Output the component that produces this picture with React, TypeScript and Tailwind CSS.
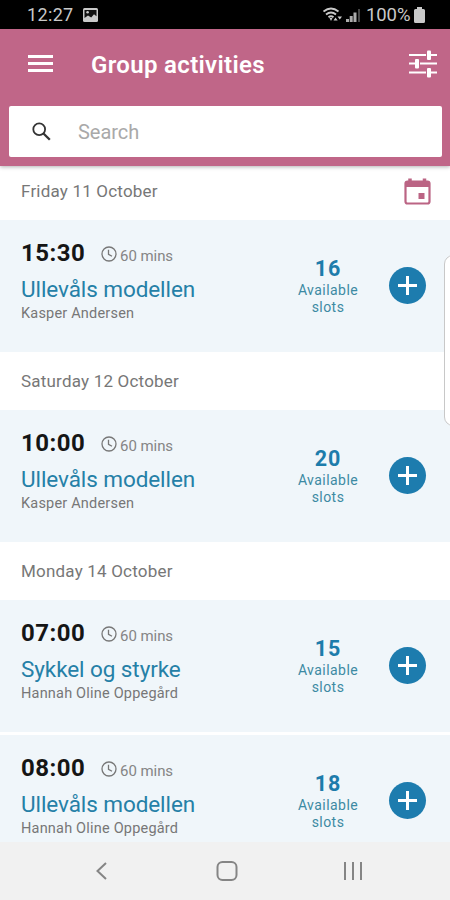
const days = [
  {
    date: "Friday 11 October",
    rowClass: "h-[54px] pb-[3px]",
    showCalendar: true,
    activities: [
      { time: "15:30", title: "Ullevåls modellen", trainer: "Kasper Andersen", slots: 16 },
    ],
  },
  {
    date: "Saturday 12 October",
    rowClass: "h-[58px]",
    showCalendar: false,
    activities: [
      { time: "10:00", title: "Ullevåls modellen", trainer: "Kasper Andersen", slots: 20 },
    ],
  },
  {
    date: "Monday 14 October",
    rowClass: "h-[58px]",
    showCalendar: false,
    activities: [
      { time: "07:00", title: "Sykkel og styrke", trainer: "Hannah Oline Oppegård", slots: 15 },
      { time: "08:00", title: "Ullevåls modellen", trainer: "Hannah Oline Oppegård", slots: 18 },
    ],
  },
];

type Activity = (typeof days)[number]["activities"][number];

function StatusBar() {
  return (
    <div className="flex h-[29px] shrink-0 items-center bg-black pl-[27px] pr-[25px] pt-px text-[#c9c9c9]">
      <span className="w-[46px] text-[18px] leading-none tracking-[0.35px]">12:27</span>
      <svg className="ml-[10px]" width="15" height="14" viewBox="0 0 15 14">
        <rect width="15" height="14" rx="1.5" fill="currentColor" />
        <path d="M1.5 10V2h12v6.3L11 6.200 8.200 9.500 5 7.500z" fill="#111" />
        <circle cx="4.6" cy="4.3" r="1.3" fill="currentColor" />
      </svg>
      <svg className="ml-auto" width="20" height="16" viewBox="0 0 20 16" fill="none" stroke="currentColor" strokeWidth="1.9">
        <path d="M0.500 4.500Q8-1.500 15.500 4.500M3 7.500Q8 3.500 13 7.500M5.500 10.300Q8 8.300 10.500 10.300" />
        <path d="M6.500 11h3L8 14z" fill="currentColor" stroke="none" />
        <path d="M10.500 13.500l2-3 2.200 3zM14.500 9.500h4.500l-2.200 3z" fill="currentColor" stroke="none" />
      </svg>
      <svg className="ml-[3px]" width="15" height="14" viewBox="0 0 15 14" fill="currentColor">
        <path d="M0 11h3v3H0zM3.700 8h3v6h-3zM7.500 4.500h3V14h-3z" opacity=".85" />
        <path d="M12 1h2v13h-2z" opacity=".35" />
      </svg>
      <span className="ml-[5px] w-[45px] text-[18.500px] leading-none tracking-[-0.1px]">100%</span>
      <svg className="ml-[3px]" width="11" height="16" viewBox="0 0 11 16" fill="currentColor">
        <path d="M3 0h5v2h1.500Q11 2 11 3.500V14.500Q11 16 9.500 16h-8Q0 16 0 14.500v-11Q0 2 1.500 2H3z" />
      </svg>
    </div>
  );
}

function Header() {
  return (
    <header className="z-10 h-[137px] shrink-0 bg-[#c06688] px-[9px] shadow-[0_1px_4px_rgba(0,0,0,0.3)]">
      <div className="flex h-[77px] items-center pb-[8px] pl-[19px] pr-[4px] text-white">
        <svg width="25" height="17" viewBox="0 0 25 17" fill="currentColor">
          <path d="M0 0h25v3H0zM0 7h25v3H0zM0 14h25v3H0z" />
        </svg>
        <h1 className="ml-[38px] pt-[2px] text-[24px] font-semibold leading-none tracking-[0.33px]">
          Group activities
        </h1>
        <svg className="ml-auto" width="28" height="28" viewBox="0 0 28 28" fill="currentColor">
          <path d="M0 4h17v2H0zM22 4h6v2h-6zM0 12.500h6v2H0zM11 12.500h17v2H11zM0 21.500h17v2H0zM22 21.500h6v2h-6z" />
          <rect x="18" y="0.500" width="4" height="9.500" rx="1" />
          <rect x="6" y="9" width="4" height="9.500" rx="1" />
          <rect x="18" y="18" width="4" height="9.500" rx="1" />
        </svg>
      </div>
      <div className="flex h-[51px] w-[433px] items-center rounded-[2px] bg-white pl-[23px]">
        <svg width="19" height="19" viewBox="0 0 19 19" fill="none" stroke="#333" strokeWidth="1.8">
          <circle cx="7.200" cy="7.200" r="5.900" />
          <path d="M11.500 11.500l6.300 6.300" strokeWidth="2.300" />
        </svg>
        <span className="ml-[27px] text-[20px] leading-none tracking-[-0.05px] text-[#a9a9a9]">Search</span>
      </div>
    </header>
  );
}

function ActivityCard({ activity }: { activity: Activity }) {
  return (
    <div className="flex h-[132px] bg-[#f0f6fa] pl-[21px] pr-[24px]">
      <div className="flex-1 pt-[17px]">
        <div className="flex h-8 items-baseline">
          <span className="w-[64px] text-[24px] font-bold leading-8 tracking-[0.5px] text-[#151515]">
            {activity.time}
          </span>
          <svg className="relative top-px ml-[16px] self-center" width="16" height="16" viewBox="0 0 16 16" fill="none" stroke="#777" strokeWidth="1.300">
            <circle cx="8" cy="8" r="7" />
            <path d="M7.500 3.800v4.500l3.500 2" />
          </svg>
          <span className="ml-[3px] text-[15px] tracking-[-0.05px] text-[#858585]">60 mins</span>
        </div>
        <div className="mt-[5px] text-[22.5px] leading-[30px] tracking-[-0.08px] text-[#2580a7]">
          {activity.title}
        </div>
        <div className="mt-[2px] text-[14.5px] leading-4 tracking-[0.2px] text-[#777]">{activity.trainer}</div>
      </div>
      <div className="w-[76px] pt-[36px] text-center text-[#3d8aa3]">
        <div className="text-[21.5px] font-bold leading-[26px] tracking-[0.8px] text-[#1d7cab]">{activity.slots}</div>
        <div className="text-[14px] leading-[17px] tracking-[0.45px]">
          Available
          <br />
          slots
        </div>
      </div>
      <button className="ml-[23px] mt-[47px] flex size-[37px] items-center justify-center rounded-full bg-[#1d7cae] text-white">
        <svg width="19" height="19" viewBox="0 0 19 19" fill="currentColor">
          <path d="M8 0h3v8h8v3h-8v8H8v-8H0V8h8z" />
        </svg>
      </button>
    </div>
  );
}

function NavBar() {
  return (
    <nav className="z-10 flex h-[58px] shrink-0 items-center bg-[#f1f1f1] pl-[96px] text-[#858585]">
      <svg width="11" height="18" viewBox="0 0 11 18" fill="none" stroke="currentColor" strokeWidth="2">
        <path d="M10 1L1.500 9l8.500 8" />
      </svg>
      <svg className="ml-[109px]" width="22" height="20" viewBox="0 0 22 20" fill="none" stroke="currentColor" strokeWidth="2">
        <rect x="1.500" y="1" width="19" height="18" rx="5" />
      </svg>
      <svg className="ml-[106px]" width="19" height="18" viewBox="0 0 19 18" fill="currentColor">
        <path d="M0 0h2v18H0zM8 0h2v18H8zM16 0h2v18h-2z" />
      </svg>
    </nav>
  );
}

export default function App() {
  return (
    <div className="relative flex h-[900px] w-[450px] flex-col overflow-hidden bg-white font-[Roboto,sans-serif]">
      <StatusBar />
      <Header />
      <main className="min-h-0 flex-1 overflow-hidden">
        {days.map((day) => (
          <section key={day.date}>
            <div className={`flex items-center justify-between pl-[21px] pr-[19px] ${day.rowClass}`}>
              <h2 className="text-[17px] leading-none tracking-[0.2px] text-[#777]">{day.date}</h2>
              {day.showCalendar && (
                <svg width="27" height="27" viewBox="0 0 27 27" fill="none" stroke="#bb6484">
                  <rect x="1.500" y="3.500" width="24" height="22" rx="2" strokeWidth="2.200" />
                  <path d="M1.500 6.500h24" strokeWidth="5" />
                  <path d="M6 0.500v4M20.500 0.500v4" strokeWidth="3.500" />
                  <path d="M14.500 15h6v6h-6z" fill="#bb6484" stroke="none" />
                </svg>
              )}
            </div>
            <div className="flex flex-col gap-[3px]">
              {day.activities.map((activity) => (
                <ActivityCard key={activity.time} activity={activity} />
              ))}
            </div>
          </section>
        ))}
      </main>
      <NavBar />
      {/* edge panel handle */}
      <div className="absolute left-[444px] top-[255px] h-[171px] w-5 rounded-[9px] border border-[#c8c8c8] bg-white" />
    </div>
  );
}
